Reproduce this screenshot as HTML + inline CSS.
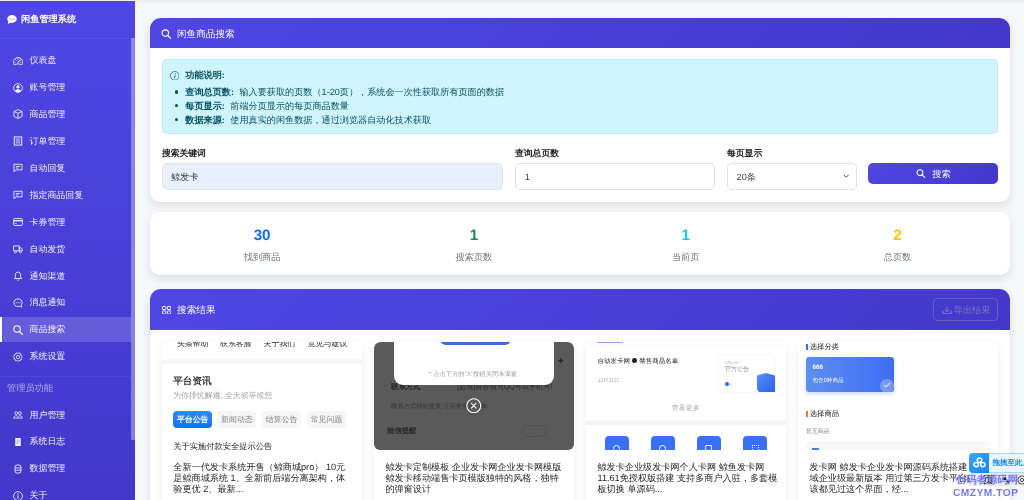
<!DOCTYPE html>
<html><head><meta charset="utf-8">
<style>
*{box-sizing:border-box;margin:0;padding:0}
html,body{width:1024px;height:500px;overflow:hidden}
body{font-family:"Liberation Sans",sans-serif;text-rendering:geometricPrecision;will-change:transform;background:#f7f8fb;position:relative;color:#212529}
.abs{position:absolute}
svg{display:block}
/* sidebar */
#sb{position:absolute;left:0;top:1px;width:135px;height:499px;background:linear-gradient(180deg,#4f46e5 0%,#4338ca 100%);overflow:hidden}
#sb .hd{position:absolute;left:0;top:0;width:135px;height:37.5px;border-bottom:1px solid rgba(255,255,255,.05)}
#sb .hd .t{position:absolute;left:21px;top:12.4px;font-size:9.2px;font-weight:bold;color:#fff;line-height:12px;white-space:nowrap}
#sb .hd svg{position:absolute;left:7px;top:14.2px}
.it{position:absolute;left:0;width:131px;height:24.6px;color:rgba(255,255,255,.93);font-size:8.95px;line-height:24.6px;white-space:nowrap}
.it .tx{position:absolute;left:29.5px;top:0}
.it svg{position:absolute;left:13px;top:7.5px}
.it.on{background:rgba(255,255,255,.17);border-left:2px solid #fff}
.it.on .tx{left:27.5px}.it.on svg{left:11px}
.sep{position:absolute;left:0;width:131px;height:1px;background:rgba(255,255,255,.06)}
.grp{position:absolute;left:7px;font-size:9.2px;color:rgba(255,255,255,.55);line-height:12px;white-space:nowrap}
#thumb{position:absolute;left:131px;top:37px;width:4px;height:402px;background:rgba(255,255,255,.35);border-radius:1px}
/* cards */
.card{position:absolute;left:150px;width:859.5px;background:#fff;border-radius:11px;box-shadow:0 4px 10px rgba(0,0,0,.11)}
.chd{position:absolute;left:0;top:0;width:100%;background:linear-gradient(135deg,#4f46e5 0%,#4338ca 100%);border-radius:11px 11px 0 0;color:#fff}
.chd .t{position:absolute;font-size:9.6px;line-height:12px;white-space:nowrap}
.info{position:absolute;left:11.5px;top:41.2px;width:836.5px;height:74.7px;background:#cff4fc;border:1px solid #b6effb;border-radius:4.5px;color:#055160;font-size:9.15px}
.info .ln{position:absolute;left:22.8px;white-space:nowrap;line-height:12px}
.info b{margin-right:5.5px}
.info .dot{position:absolute;left:12.5px;width:3.2px;height:3.2px;border-radius:50%;background:#055160}
.lbl{position:absolute;font-size:8.8px;font-weight:bold;line-height:12px;color:#212529;white-space:nowrap}
.inp{position:absolute;height:26.6px;border:1px solid #dee2e6;border-radius:5px;background:#fff;font-size:9.07px;color:#3a3f44;line-height:26.4px;padding-left:8.5px;white-space:nowrap}
.btn{position:absolute;background:linear-gradient(135deg,#4f46e5 0%,#4338ca 100%);border-radius:5px;color:#fff;font-size:9.3px}
.stat{position:absolute;top:0;width:211.8px;text-align:center}
.stat .n{position:absolute;left:0;width:100%;top:15.2px;font-size:15.2px;font-weight:bold;line-height:18px}
.stat .l{position:absolute;left:0;width:100%;top:39.5px;font-size:9.2px;color:#6c757d;line-height:12px}
.pc{position:absolute;top:342px;width:200.1px;height:170px;background:#fff;border-radius:6px;box-shadow:0 2px 10px rgba(0,0,0,.07);overflow:hidden}
.pimg{position:absolute;left:0;top:0;width:200.1px;height:107.6px;overflow:hidden;border-radius:6px;background:#fff}
.ptx{position:absolute;left:11.8px;top:120px;width:180px;font-size:9.15px;line-height:11px;color:#262626;white-space:nowrap}
</style></head><body>
<div class="abs" style="left:0;top:0;width:1024px;height:1px;background:#eeeeea"></div>
<div class="abs" style="left:135px;top:1px;width:889px;height:2px;background:linear-gradient(#ececec,#f7f8fb)"></div>

<!-- SIDEBAR -->
<div id="sb">
 <div class="hd">
  <svg width="10" height="9" viewBox="0 0 16 15"><path fill="#fff" d="M8 0C3.6 0 0 2.9 0 6.5c0 1.6.7 3.1 1.9 4.2L1 15l4.2-2.2c.9.3 1.8.4 2.8.4 4.4 0 8-2.9 8-6.5S12.4 0 8 0z"/><circle cx="4.6" cy="6.5" r=".85" fill="#4f46e5"/><circle cx="8" cy="6.5" r=".85" fill="#4f46e5"/><circle cx="11.4" cy="6.5" r=".85" fill="#4f46e5"/></svg>
  <div class="t">闲鱼管理系统</div>
 </div>
 <div id="thumb"></div>
</div>
<div id="nav"><div class="it" style="top:48.10px"><svg width="10" height="10" viewBox="0 0 16 16"><path d="M0 10a8 8 0 1 1 15.547 2.661c-.442 1.253-1.845 1.602-2.932 1.25C11.309 13.488 9.475 13 8 13c-1.474 0-3.31.488-4.615.911-1.087.352-2.49.003-2.932-1.25A7.988 7.988 0 0 1 0 10zm8-7a7 7 0 0 0-6.603 9.329c.203.575.923.876 1.68.63C4.397 12.533 6.358 12 8 12s3.604.532 4.923.96c.757.245 1.477-.056 1.68-.631A7 7 0 0 0 8 3z" fill="#fff"/><path d="M8 4a.5.5 0 0 1 .5.5V6a.5.5 0 0 1-1 0V4.5A.5.5 0 0 1 8 4zM3.732 5.732a.5.5 0 0 1 .707 0l.915.914a.5.5 0 1 1-.708.708l-.914-.915a.5.5 0 0 1 0-.707zM2 10a.5.5 0 0 1 .5-.5h1.586a.5.5 0 0 1 0 1H2.5A.5.5 0 0 1 2 10zm9.5 0a.5.5 0 0 1 .5-.5h1.5a.5.5 0 0 1 0 1H12a.5.5 0 0 1-.5-.5zm.754-4.246a.389.389 0 0 0-.527-.02L7.547 9.31a.91.91 0 1 0 1.302 1.258l3.434-4.297a.389.389 0 0 0-.029-.518z" fill="#fff"/></svg><span class="tx">仪表盘</span></div>
<div class="it" style="top:75.03px"><svg width="10" height="10" viewBox="0 0 16 16"><circle cx="8" cy="8" r="7" fill="none" stroke="#fff" stroke-width="1.3"/><circle cx="8" cy="6" r="2.6" fill="#fff"/><path d="M3.3 12.8C4.3 10.8 6 10 8 10s3.7.8 4.7 2.8A7 7 0 0 1 3.3 12.8z" fill="#fff"/></svg><span class="tx">账号管理</span></div>
<div class="it" style="top:101.96px"><svg width="10" height="10" viewBox="0 0 16 16"><path d="M8 1l6.5 3v8L8 15l-6.5-3V4z M1.5 4L8 7l6.5-3 M8 7v8" fill="none" stroke="#fff" stroke-width="1.3" stroke-linejoin="round"/></svg><span class="tx">商品管理</span></div>
<div class="it" style="top:128.89px"><svg width="10" height="10" viewBox="0 0 16 16"><rect x="2" y="1.5" width="12" height="13" fill="none" stroke="#fff" stroke-width="1.4"/><path d="M4.5 5h7M4.5 8h7M4.5 11h7" stroke="#fff" stroke-width="1.2"/></svg><span class="tx">订单管理</span></div>
<div class="it" style="top:155.82px"><svg width="10" height="10" viewBox="0 0 16 16"><path d="M1.5 2h13v9H5l-3.5 3z" fill="none" stroke="#fff" stroke-width="1.3" stroke-linejoin="round"/><path d="M4.5 5.5h7M4.5 8h4.5" stroke="#fff" stroke-width="1.2"/></svg><span class="tx">自动回复</span></div>
<div class="it" style="top:182.75px"><svg width="10" height="10" viewBox="0 0 16 16"><path d="M1.5 2h13v9H5l-3.5 3z" fill="none" stroke="#fff" stroke-width="1.3" stroke-linejoin="round"/><path d="M4.5 5.5h7M4.5 8h4.5" stroke="#fff" stroke-width="1.2"/></svg><span class="tx">指定商品回复</span></div>
<div class="it" style="top:209.68px"><svg width="10" height="10" viewBox="0 0 16 16"><rect x="1" y="2.5" width="14" height="11" rx="1.5" fill="none" stroke="#fff" stroke-width="1.3"/><path d="M1 6h14" stroke="#fff" stroke-width="2"/><path d="M3 10.5h3" stroke="#fff" stroke-width="1.2"/></svg><span class="tx">卡券管理</span></div>
<div class="it" style="top:236.61px"><svg width="10" height="10" viewBox="0 0 16 16"><path d="M1 3h9v8H1z M10 6h3l2 2.5V11h-5z" fill="none" stroke="#fff" stroke-width="1.3" stroke-linejoin="round"/><circle cx="4" cy="12.5" r="1.6" fill="#4a40d6" stroke="#fff" stroke-width="1.2"/><circle cx="12" cy="12.5" r="1.6" fill="#4a40d6" stroke="#fff" stroke-width="1.2"/></svg><span class="tx">自动发货</span></div>
<div class="it" style="top:263.54px"><svg width="10" height="10" viewBox="0 0 16 16"><path d="M8 1.8c-2.6 0-4.2 2-4.2 4.5v3.5L2.3 12h11.4l-1.5-2.2V6.3C12.2 3.8 10.6 1.8 8 1.8z" fill="none" stroke="#fff" stroke-width="1.3" stroke-linejoin="round"/><path d="M6.5 13.8a1.6 1.6 0 0 0 3 0" fill="none" stroke="#fff" stroke-width="1.2"/></svg><span class="tx">通知渠道</span></div>
<div class="it" style="top:290.47px"><svg width="10" height="10" viewBox="0 0 16 16"><path d="M8 1.5a6.5 6 0 1 0 0 12c.9 0 1.7-.1 2.5-.4L14 14.5l-1-3A6 6 0 0 0 14.5 7.5 6.5 6 0 0 0 8 1.5z" fill="none" stroke="#fff" stroke-width="1.3"/><circle cx="5" cy="7.5" r=".9" fill="#fff"/><circle cx="8" cy="7.5" r=".9" fill="#fff"/><circle cx="11" cy="7.5" r=".9" fill="#fff"/></svg><span class="tx">消息通知</span></div>
<div class="it on" style="top:317.40px"><svg width="10" height="10" viewBox="0 0 16 16"><circle cx="6.5" cy="6.5" r="5.2" fill="none" stroke="#fff" stroke-width="1.7"/><path d="M10.4 10.4L15 15" stroke="#fff" stroke-width="1.9" stroke-linecap="round"/></svg><span class="tx">商品搜索</span></div>
<div class="it" style="top:344.33px"><svg width="10" height="10" viewBox="0 0 16 16"><path d="M8 .8l1.4 1.6 2.1-.5.5 2.1 2 .8-.7 2L15 8.4l-1.6 1.4.5 2.1-2.1.5-.8 2-2-.7L7.6 15 6.2 13.4l-2.1.5-.5-2.1-2-.8.7-2L.8 7.6 2.4 6.2 1.9 4.1 4 3.6l.8-2 2 .7z" fill="none" stroke="#fff" stroke-width="1.2" stroke-linejoin="round"/><circle cx="8" cy="8" r="2.6" fill="none" stroke="#fff" stroke-width="1.2"/></svg><span class="tx">系统设置</span></div>
<div class="sep" style="top:375.6px"></div>
<div class="grp" style="top:382px">管理员功能</div>
<div class="it" style="top:402.50px"><svg width="10" height="10" viewBox="0 0 16 16"><circle cx="5.2" cy="5" r="2.3" fill="none" stroke="#fff" stroke-width="1.2"/><circle cx="11" cy="5" r="2.3" fill="none" stroke="#fff" stroke-width="1.2"/><path d="M1 13c.3-2.5 2-3.8 4.2-3.8S9.2 10.5 9.5 13z M9.5 9.4c.5-.2 1-.2 1.5-.2 2.2 0 3.8 1.3 4 3.8h-5" fill="none" stroke="#fff" stroke-width="1.2" stroke-linejoin="round"/></svg><span class="tx">用户管理</span></div>
<div class="it" style="top:429.40px"><svg width="10" height="10" viewBox="0 0 16 16"><rect x="3.5" y="1.5" width="9" height="13" rx="1" fill="#fff" fill-opacity=".92"/><path d="M5.5 5h5M5.5 7.5h5M5.5 10h3" stroke="#7a70e0" stroke-width=".8"/></svg><span class="tx">系统日志</span></div>
<div class="it" style="top:456.30px"><svg width="10" height="10" viewBox="0 0 16 16"><rect x="3.2" y="1.5" width="9.6" height="13" rx="3.5" fill="none" stroke="#fff" stroke-width="1.4"/><path d="M3.5 6.2h9M3.5 9.8h9" stroke="#fff" stroke-width="1.2"/></svg><span class="tx">数据管理</span></div>
<div class="it" style="top:483.20px"><svg width="10" height="10" viewBox="0 0 16 16"><circle cx="8" cy="8" r="7" fill="none" stroke="#fff" stroke-width="1.3"/><path d="M8 7v5" stroke="#fff" stroke-width="1.5"/><circle cx="8" cy="4.6" r="1" fill="#fff"/></svg><span class="tx">关于</span></div></div>

<!-- SEARCH CARD -->
<div class="card" style="top:17.8px;height:184px">
 <div class="chd" style="height:30px">
  <svg class="abs" style="left:11px;top:11.4px" width="10.5" height="10" viewBox="0 0 16 16"><circle cx="6.5" cy="6.5" r="5.2" fill="none" stroke="#fff" stroke-width="1.8"/><path d="M10.4 10.4L15 15" stroke="#fff" stroke-width="2" stroke-linecap="round"/></svg>
  <div class="t" style="left:27px;top:11px">闲鱼商品搜索</div>
 </div>
 <div class="info">
  <svg class="abs" style="left:7.2px;top:10.6px" width="9.6" height="9.6" viewBox="0 0 16 16"><circle cx="8" cy="8" r="7.2" fill="none" stroke="#055160" stroke-width="1.1"/><path d="M8.6 6.8L7.3 12" stroke="#055160" stroke-width="1.3"/><circle cx="8.8" cy="4.6" r=".9" fill="#055160"/></svg>
  <div class="ln" style="top:9px;font-weight:bold">功能说明:</div>
  <div class="dot" style="top:30.4px"></div><div class="ln" style="top:26.5px"><b>查询总页数:</b>输入要获取的页数（1-20页），系统会一次性获取所有页面的数据</div>
  <div class="dot" style="top:44px"></div><div class="ln" style="top:40.2px"><b>每页显示:</b>前端分页显示的每页商品数量</div>
  <div class="dot" style="top:58px"></div><div class="ln" style="top:54.2px"><b>数据来源:</b>使用真实的闲鱼数据，通过浏览器自动化技术获取</div>
 </div>
 <div class="lbl" style="left:11.9px;top:129px">搜索关键词</div>
 <div class="inp" style="left:11.5px;top:145.2px;width:341.5px;background:#e8f0fe;border-color:#dfe6f3">鲸发卡</div>
 <div class="lbl" style="left:365px;top:129px">查询总页数</div>
 <div class="inp" style="left:365.2px;top:145.2px;width:199.5px">1</div>
 <div class="lbl" style="left:577px;top:129px">每页显示</div>
 <div class="inp" style="left:577.1px;top:145.2px;width:129.5px">20条
  <svg class="abs" style="left:115px;top:10px" width="6.5" height="4" viewBox="0 0 8 5"><path d="M1 1l3 3 3-3" fill="none" stroke="#343a40" stroke-width="1.1"/></svg>
 </div>
 <div class="btn" style="left:718.2px;top:145.5px;width:130px;height:21.1px">
  <svg class="abs" style="left:48px;top:5.7px" width="9.5" height="9" viewBox="0 0 16 16"><circle cx="6.5" cy="6.5" r="5.2" fill="none" stroke="#fff" stroke-width="1.8"/><path d="M10.4 10.4L15 15" stroke="#fff" stroke-width="2" stroke-linecap="round"/></svg>
  <div class="abs" style="left:64px;top:4.5px;line-height:12px">搜索</div>
 </div>
</div>

<!-- STATS CARD -->
<div class="card" style="top:211.5px;height:63.3px">
 <div class="stat" style="left:6.2px"><div class="n" style="color:#0d6efd">30</div><div class="l">找到商品</div></div>
 <div class="stat" style="left:218px"><div class="n" style="color:#198754">1</div><div class="l">搜索页数</div></div>
 <div class="stat" style="left:429.8px"><div class="n" style="color:#0dcaf0">1</div><div class="l">当前页</div></div>
 <div class="stat" style="left:641.6px"><div class="n" style="color:#ffc107">2</div><div class="l">总页数</div></div>
</div>

<!-- RESULTS CARD -->
<div class="card" style="top:289px;height:240px">
 <div class="chd" style="height:41px">
  <svg class="abs" style="left:11.8px;top:17px" width="9.3" height="8.4" viewBox="0 0 9.3 8.4"><rect x=".45" y=".45" width="3.4" height="3.1" rx=".5" fill="none" stroke="#fff" stroke-width=".9"/><rect x="5.45" y=".45" width="3.4" height="3.1" rx=".5" fill="none" stroke="#fff" stroke-width=".9"/><rect x=".45" y="4.85" width="3.4" height="3.1" rx=".5" fill="none" stroke="#fff" stroke-width=".9"/><rect x="5.45" y="4.85" width="3.4" height="3.1" rx=".5" fill="none" stroke="#fff" stroke-width=".9"/></svg>
  <div class="t" style="left:27.1px;top:16px">搜索结果</div>
  <div class="abs" style="left:783px;top:9px;width:65px;height:22.5px;border:1px solid rgba(140,140,160,.45);border-radius:4px;color:rgba(150,150,170,.7);font-size:9px">
   <svg class="abs" style="left:7.5px;top:6.5px" width="10" height="8.5" viewBox="0 0 10 8.5"><path d="M5 .5v5.2M2.9 3.6L5 5.7l2.1-2.1M.8 4.5v3.2h8.4V4.5" fill="none" stroke="rgba(150,150,170,.75)" stroke-width="1"/></svg>
   <div class="abs" style="left:19.6px;top:5px;line-height:12px;white-space:nowrap;font-size:9.2px">导出结果</div>
  </div>
 </div>
</div>

<div id="grid">
<!-- card 1 -->
<div class="pc" style="left:161.5px">
 <div class="pimg">
  <div class="abs" style="left:0;top:0;width:200px;height:15.3px;background:#fff"></div>
  <div class="abs" style="left:15.5px;top:-3.3px;font-size:7.9px;line-height:10px;color:#262626;white-space:nowrap">头条帮助</div><div class="abs" style="left:58.5px;top:-3.3px;font-size:7.9px;line-height:10px;color:#262626;white-space:nowrap">联系客服</div><div class="abs" style="left:102.1px;top:-3.3px;font-size:7.9px;line-height:10px;color:#262626;white-space:nowrap">关于我们</div><div class="abs" style="left:146.3px;top:-3.3px;font-size:7.9px;line-height:10px;color:#262626;white-space:nowrap">意见与建议</div>
  <div class="abs" style="left:0;top:16.5px;width:200px;height:5px;background:linear-gradient(#fafafa,#f5f5f6 50%,#f9f9fa)"></div>
  <div class="abs" style="left:11.7px;top:34.3px;font-size:9.6px;line-height:11px;font-weight:bold;color:#3a3a3a;white-space:nowrap">平台资讯</div>
  <div class="abs" style="left:11.7px;top:48.5px;font-size:7.9px;line-height:10px;color:#a0a0a0;white-space:nowrap">为你排忧解难, 全天候等候您</div>
  <div class="abs" style="left:11.7px;top:68.6px;width:39px;height:17.6px;border-radius:4px;background:linear-gradient(180deg,#2a8bff,#1570f5);color:#fff;font-size:7.9px;font-weight:bold;line-height:17.6px;text-align:center;white-space:nowrap">平台公告</div>
  <div class="abs" style="left:55.9px;top:68.6px;width:39px;height:17.6px;border-radius:4px;background:#f6f6f7;color:#808080;font-size:7.9px;line-height:17.6px;text-align:center;white-space:nowrap">新闻动态</div>
  <div class="abs" style="left:100.5px;top:68.6px;width:39px;height:17.6px;border-radius:4px;background:#f6f6f7;color:#808080;font-size:7.9px;line-height:17.6px;text-align:center;white-space:nowrap">结算公告</div>
  <div class="abs" style="left:145.5px;top:68.6px;width:39px;height:17.6px;border-radius:4px;background:#f6f6f7;color:#808080;font-size:7.9px;line-height:17.6px;text-align:center;white-space:nowrap">常见问题</div>
  <div class="abs" style="left:11.7px;top:99.5px;font-size:8.25px;line-height:10px;color:#222;font-weight:500;white-space:nowrap">关于实施付款安全提示公告</div>
 </div>
 <div class="ptx">全新一代发卡系统开售（鲸商城pro） 10元<br>是鲸商城系统 1、全新前后端分离架构，体<br>验更优 2、最新...</div>
</div>
<!-- card 2 -->
<div class="pc" style="left:373.6px">
 <div class="pimg" style="background:#5a5a5a">
  <div class="abs" style="left:10px;top:16px;font-size:7px;color:#b03a2e;line-height:8px">*</div>
  <div class="abs" style="left:184.5px;top:13.5px;font-size:10px;font-weight:bold;color:#1a1a1a;line-height:12px">+</div>
  <div class="abs" style="left:10px;top:41.5px;font-size:7px;color:#8b2a22;line-height:8px">*</div>
  <div class="abs" style="left:17.5px;top:39.5px;font-size:7.3px;font-weight:bold;color:#222;line-height:9px;white-space:nowrap">联系方式</div>
  <div class="abs" style="left:83.7px;top:41px;font-size:7.1px;color:#262626;line-height:8px;white-space:nowrap">[必填]推荐填写QQ号或手机号!</div>
  <div class="abs" style="left:17.5px;top:61px;font-size:6.3px;color:#383838;line-height:8px;white-space:nowrap">联系方式特别重要,可用来查询订单</div>
  <div class="abs" style="left:13.5px;top:84px;font-size:7.3px;font-weight:bold;color:#262626;line-height:9px;white-space:nowrap">短信提醒</div>
  <div class="abs" style="left:148.7px;top:83px;width:24.7px;height:11.6px;border-radius:6px;border:1px solid #505050"></div>
  <div class="abs" style="left:20.4px;top:-10px;width:159.6px;height:53.4px;background:#fff;border-radius:9px">
   <div class="abs" style="left:46px;top:0;width:70.6px;height:13px;background:#3a6be0;border-radius:0 0 6px 6px;overflow:hidden"><div class="abs" style="left:0;top:4.2px;width:70.6px;text-align:center;font-size:6.5px;font-weight:bold;color:#fff;line-height:8px;white-space:nowrap">提交订单</div></div>
   <div class="abs" style="left:35px;top:38.5px;font-size:6.3px;color:#9d9d9d;line-height:8px;white-space:nowrap">* 点击下方的“X”按钮关闭本弹窗</div>
  </div>
  <svg class="abs" style="left:92.5px;top:55.8px" width="15.5" height="15.5" viewBox="0 0 16 16"><circle cx="8" cy="8" r="7.2" fill="none" stroke="#fff" stroke-width="1.1"/><path d="M5.3 5.3l5.4 5.4M10.7 5.3l-5.4 5.4" stroke="#fff" stroke-width="1.2"/></svg>
 </div>
 <div class="ptx">鲸发卡定制模板 企业发卡网企业发卡网模版<br>鲸发卡移动端售卡页模版独特的风格，独特<br>的弹窗设计</div>
</div>
<!-- card 3 -->
<div class="pc" style="left:585.7px">
 <div class="pimg">
  <div class="abs" style="left:11.7px;top:0;width:25.5px;height:1.2px;background:#8db0f5"></div>
  <div class="abs" style="left:0;top:3.6px;width:200.1px;height:74px;background:#fff;box-shadow:0 0 3px rgba(0,0,0,.06)"></div>
  <div class="abs" style="left:11.7px;top:14.6px;font-size:6.5px;font-weight:500;color:#222;line-height:9px;white-space:nowrap">自动发卡网<span style="display:inline-block;width:4.6px;height:4.6px;border-radius:50%;background:#222;vertical-align:0px;margin:0 2.2px 0 2.6px"></span>禁售商品名单</div>
  <div class="abs" style="left:11.7px;top:34.5px;font-size:5.3px;color:#aaa;line-height:8px;white-space:nowrap">12月11日</div>
  <div class="abs" style="left:133.3px;top:14px;width:56px;height:36.4px;background:#fff;border-radius:3px;box-shadow:0 0 3px rgba(0,0,0,.08)">
   <div class="abs" style="left:6px;top:3.5px;font-size:4.5px;color:#bbb;line-height:6px">official</div>
   <div class="abs" style="left:6px;top:9.5px;font-size:6px;color:#999;line-height:8px;white-space:nowrap">官方公告</div>
   <div class="abs" style="left:6px;top:26.5px;width:7px;height:3.5px;border-radius:2px;background:#dde6fb"></div>
   <div class="abs" style="left:6px;top:26.3px;width:4px;height:4px;border-radius:50%;background:#2f66ef"></div>
   <svg class="abs" style="left:37.8px;top:17px" width="18.2" height="19.4" viewBox="0 0 18 19"><defs><linearGradient id="shg" x1="0" y1="0" x2="1" y2="1"><stop offset="0" stop-color="#5a8ff8"/><stop offset="1" stop-color="#2c5fea"/></linearGradient></defs><path d="M9 0L18 2.5V19H4C1.8 19 0 17.2 0 15V2.5z" fill="url(#shg)"/></svg>
  </div>
  <div class="abs" style="left:0;top:62px;width:200.1px;text-align:center;font-size:7px;color:#aaa;line-height:10px">查看更多</div>
  <div class="abs" style="left:0;top:79px;width:200.1px;height:4px;background:#eef5f6"></div>
  <div class="abs" style="left:19px;top:94px;width:24px;height:20px;background:#3a6ff7;border-radius:4px"><div class="abs" style="left:8.5px;top:8.5px;width:7px;height:7px;border:1.3px solid #fff;border-radius:50%"></div></div>
  <div class="abs" style="left:65px;top:94px;width:24px;height:20px;background:#3a6ff7;border-radius:4px"><div class="abs" style="left:8.5px;top:8.5px;width:7px;height:7px;border:1.3px solid #fff;border-radius:50%"></div></div>
  <div class="abs" style="left:111.3px;top:94px;width:24px;height:20px;background:#3a6ff7;border-radius:4px"><div class="abs" style="left:8.5px;top:8.5px;width:7px;height:7px;border:1.3px solid #fff;border-radius:1px"></div></div>
  <div class="abs" style="left:157.6px;top:94px;width:24px;height:20px;background:#3a6ff7;border-radius:4px"><div class="abs" style="left:8.5px;top:8.5px;width:7px;height:7px;border:1.3px dotted #fff"></div></div>
 </div>
 <div class="ptx">鲸发卡企业级发卡网个人卡网 鲸鱼发卡网<br>11.61免授权版搭建 支持多商户入驻，多套模<br>板切换 单源码...</div>
</div>
<!-- card 4 -->
<div class="pc" style="left:797.8px">
 <div class="pimg">
  <div class="abs" style="left:8.2px;top:2.3px;width:1.6px;height:6px;background:#3b6cf0"></div>
  <div class="abs" style="left:12px;top:0px;font-size:7.3px;font-weight:500;color:#222;line-height:9px;white-space:nowrap">选择分类</div>
  <div class="abs" style="left:8.2px;top:14.8px;width:88px;height:34.8px;border-radius:3px;background:linear-gradient(90deg,#5b8ff0,#3f6ef3);box-shadow:0 2px 4px rgba(60,110,240,.25);overflow:hidden">
   <div class="abs" style="left:6.5px;top:7px;font-size:6.3px;font-weight:bold;color:#fff;line-height:8px">666</div>
   <div class="abs" style="left:6.5px;top:20.5px;font-size:5.6px;color:#fff;line-height:8px;white-space:nowrap">包含0种商品</div>
   <div class="abs" style="left:74.5px;top:22.5px;width:14px;height:14px;border-radius:50%;background:rgba(255,255,255,.28)"></div><svg class="abs" style="left:77.5px;top:25.5px" width="8" height="6" viewBox="0 0 8 6"><path d="M1 3l2 2 4-4" fill="none" stroke="rgba(255,255,255,.7)" stroke-width="1.2"/></svg>
  </div>
  <div class="abs" style="left:8.2px;top:69px;width:1.6px;height:6px;background:#e8793a"></div>
  <div class="abs" style="left:12px;top:67.2px;font-size:7.3px;font-weight:500;color:#222;line-height:9px;white-space:nowrap">选择商品</div>
  <div class="abs" style="left:8.2px;top:85.5px;font-size:5.8px;color:#888;line-height:8px;white-space:nowrap">暂无商品</div>
  <div class="abs" style="left:8.2px;top:98.5px;width:183.7px;height:20px;border-radius:4px;background:#f8f8fa"><div class="abs" style="left:6px;top:7px;width:6.6px;height:6px;background:#4a7be8"></div></div>
 </div>
 <div class="ptx">发卡网 鲸发卡企业发卡网源码系统搭建<br>域企业级最新版本 用过第三方发卡平台的<br>该都见过这个界面，经...</div>
</div>
</div>

<!-- overlays -->
<div class="abs" style="left:969px;top:472.7px;width:55px;height:13.7px;background:#ececec"></div>
<div class="abs" style="left:969px;top:452.6px;width:20px;height:20.1px;border-radius:4px 0 0 4px;background:linear-gradient(135deg,#3aa7ff,#1586f5)">
 <svg class="abs" style="left:3.5px;top:4.5px" width="13" height="11" viewBox="0 0 13 11"><circle cx="6.5" cy="3.2" r="2.2" fill="none" stroke="#fff" stroke-width="1.5"/><circle cx="3.2" cy="7.6" r="2.2" fill="none" stroke="#fff" stroke-width="1.5"/><circle cx="9.8" cy="7.6" r="2.2" fill="none" stroke="#fff" stroke-width="1.5"/></svg>
</div>
<div class="abs" style="left:989px;top:452.6px;width:40px;height:20.1px;background:#eaf5ff;border:1px solid #a8d5ff;border-left:none"></div>
<div class="abs" style="left:992.4px;top:457.5px;font-size:7.5px;font-weight:bold;color:#1b8af0;line-height:10px;white-space:nowrap">拖拽至此上传</div>
<div class="abs" style="left:955.8px;top:475.3px;font-size:10.4px;font-weight:bold;color:rgba(85,90,240,.8);line-height:12px;white-space:nowrap">创码者源码网</div>
<div class="abs" style="left:953px;top:487.5px;font-size:10.2px;font-weight:bold;color:rgba(85,90,240,.8);line-height:11px;white-space:nowrap;letter-spacing:.5px">CMZYM.TOP</div>

<div class="abs" style="left:983.5px;top:474.5px;font-size:10px;color:#1a1a1a;line-height:12px;white-space:nowrap">页</div>
<div class="abs" style="left:1003px;top:474px;font-size:10px;font-weight:bold;color:#1a1a1a;line-height:12px;white-space:nowrap">•,</div>
<svg class="abs" style="left:1017px;top:474.5px" width="10" height="10" viewBox="0 0 16 16"><path d="M8 .8l1.4 1.6 2.1-.5.5 2.1 2 .8-.7 2L15 8.4l-1.6 1.4.5 2.1-2.1.5-.8 2-2-.7L7.6 15 6.2 13.4l-2.1.5-.5-2.1-2-.8.7-2L.8 7.6 2.4 6.2 1.9 4.1 4 3.6l.8-2 2 .7z" fill="none" stroke="#444" stroke-width="1.5" stroke-linejoin="round"/><circle cx="8" cy="8" r="2.6" fill="none" stroke="#444" stroke-width="1.5"/></svg>
</body></html>
